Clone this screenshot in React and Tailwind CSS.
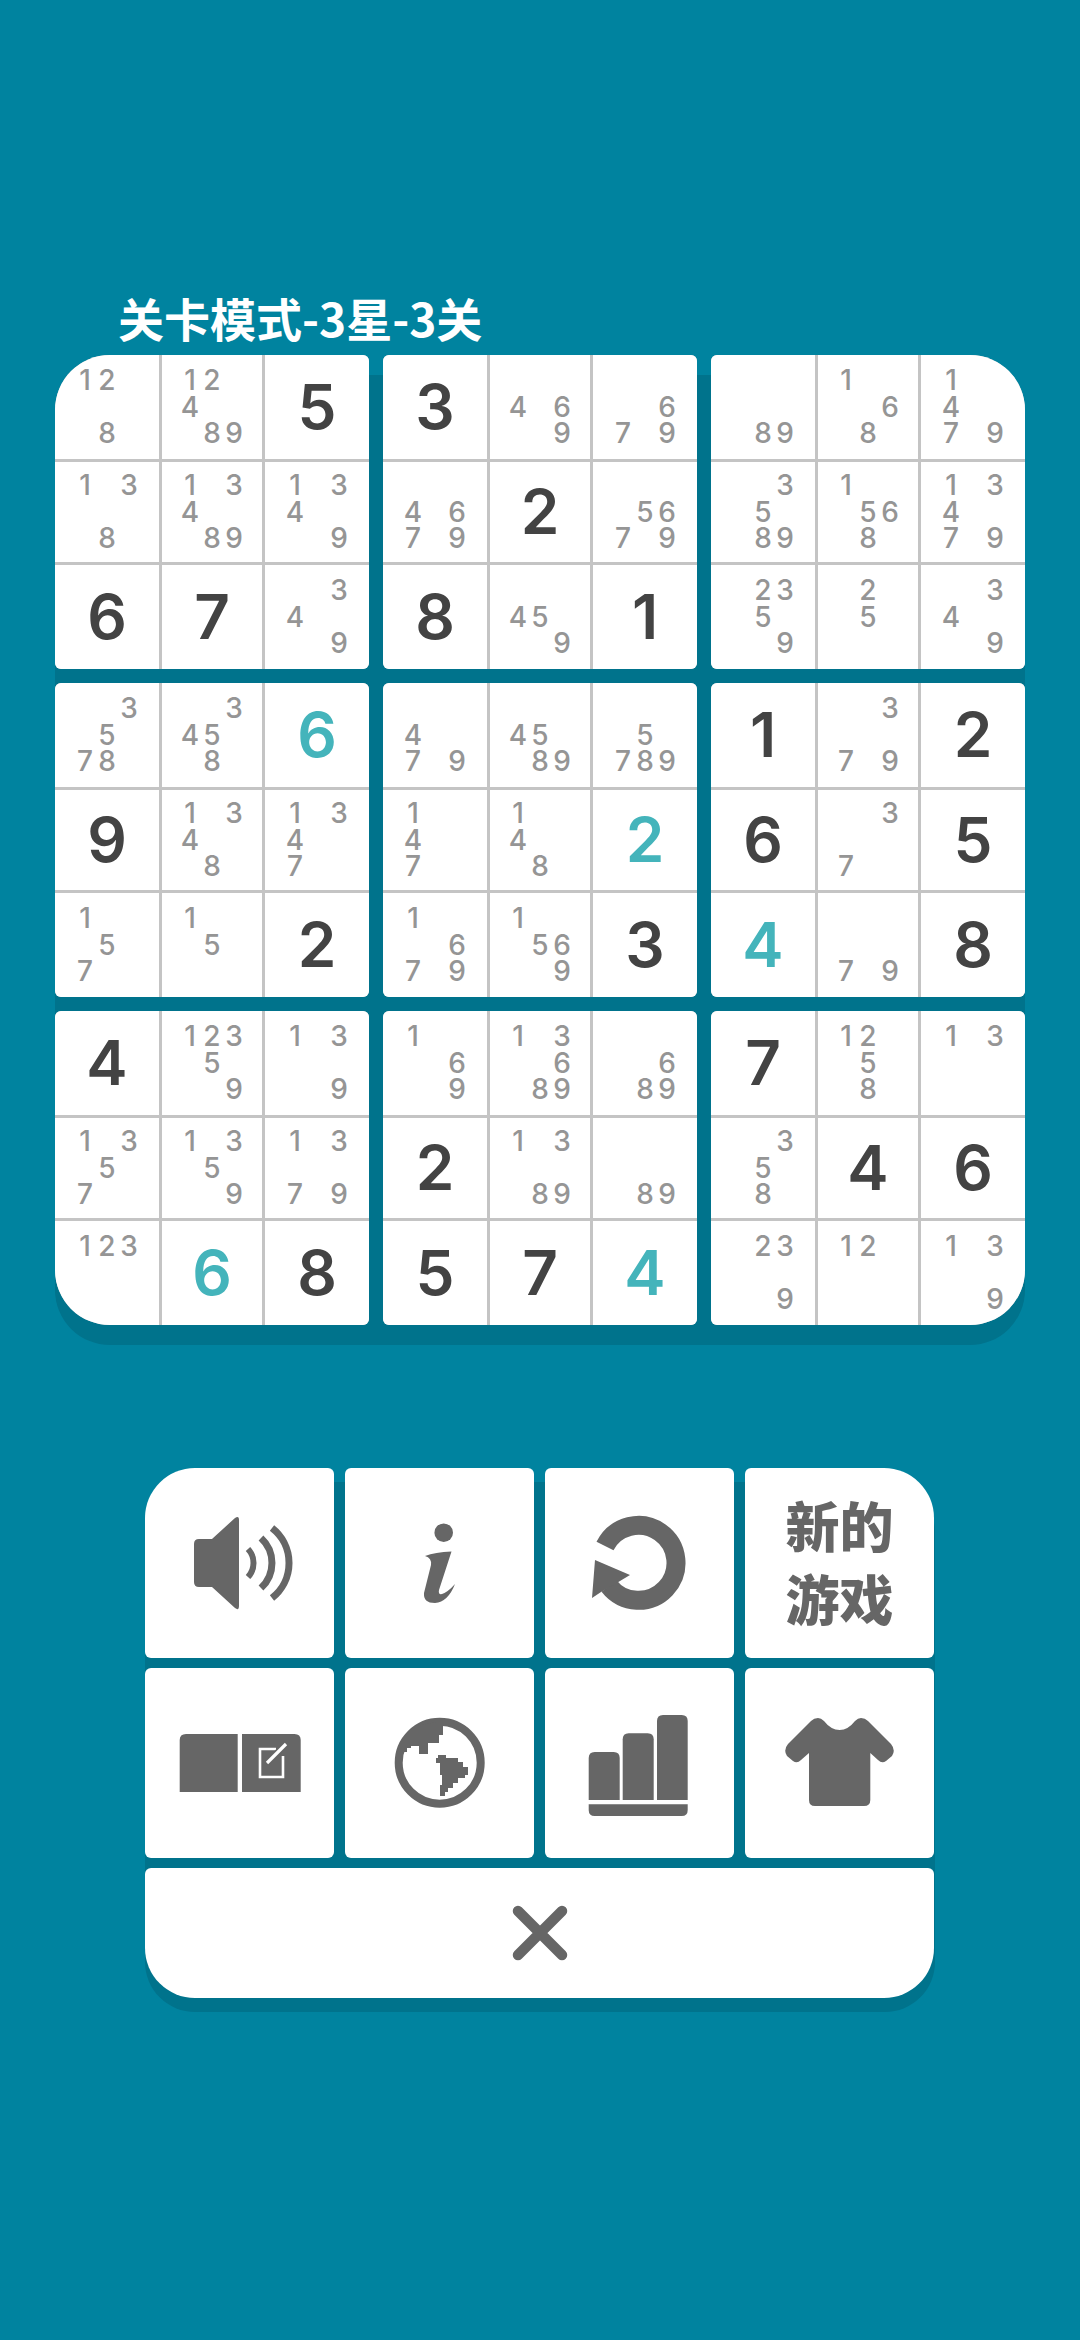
import React from 'react';

const CJK = { fontFamily: '"Noto Sans CJK SC", sans-serif' };
const NUM = { fontFamily: 'Inter, sans-serif' };

// every cell: number = placed digit, 't' suffix = teal digit, p… = pencil marks
const BLOCKS = [
  ['p128', 'p12489', '5', 'p138', 'p13489', 'p1349', '6', '7', 'p349'],
  ['3', 'p469', 'p679', 'p4679', '2', 'p5679', '8', 'p459', '1'],
  ['p89', 'p168', 'p1479', 'p3589', 'p1568', 'p13479', 'p2359', 'p25', 'p349'],
  ['p3578', 'p3458', '6t', '9', 'p1348', 'p1347', 'p157', 'p15', '2'],
  ['p479', 'p4589', 'p5789', 'p147', 'p148', '2t', 'p1679', 'p1569', '3'],
  ['1', 'p379', '2', '6', 'p37', '5', '4t', 'p79', '8'],
  ['4', 'p12359', 'p139', 'p1357', 'p1359', 'p1379', 'p123', '6t', '8'],
  ['p169', 'p13689', 'p689', '2', 'p1389', 'p89', '5', '7', '4t'],
  ['7', 'p1258', 'p13', 'p358', '4', '6', 'p239', 'p12', 'p139'],
];

const CORNERS = {
  0: 'rounded-tl-[55px]',
  2: 'rounded-tr-[55px]',
  6: 'rounded-bl-[55px]',
  8: 'rounded-br-[55px]',
};

function Cell({ value }) {
  if (value[0] === 'p') {
    return (
      <div className="bg-white flex items-center justify-center">
        <div className="grid grid-cols-[repeat(3,22px)] grid-rows-[repeat(3,26.5px)] text-[28px] leading-[26px] font-medium text-[#959595]" style={NUM}>
          {[1, 2, 3, 4, 5, 6, 7, 8, 9].map((n) => (
            <span key={n} className="text-center">
              {value.includes(String(n)) ? n : ''}
            </span>
          ))}
        </div>
      </div>
    );
  }
  const teal = value.endsWith('t');
  return (
    <div className={`bg-white flex items-center justify-center text-[62px] leading-none font-semibold ${teal ? 'text-[#44b4bb]' : 'text-[#434343]'}`} style={NUM}>
      {value[0]}
    </div>
  );
}

function Block({ cells, corner }) {
  return (
    <div className={`grid grid-cols-[104px_100px_104px] grid-rows-[104px_100px_104px] gap-[3px] bg-[#c4c4c4] rounded-[6px] overflow-hidden ${corner || ''}`}>
      {cells.map((c, i) => <Cell key={i} value={c} />)}
    </div>
  );
}

function TileIcon({ children }) {
  return <svg viewBox="0 0 189 190" className="w-full h-full" fill="#666666">{children}</svg>;
}

const Speaker = () => (
  <TileIcon>
    <path d="M54 71H67L90 50Q94 47 94 52V138Q94 143 90 140L67 119H54Q49 119 49 114V76Q49 71 54 71Z" />
    <g fill="none" stroke="#666666">
      <path d="M103 81A20.5 20.5 0 0 1 103 109" strokeWidth="6" />
      <path d="M116 70A34 34 0 0 1 116 120" strokeWidth="7" />
      <path d="M127 60A44.5 44.5 0 0 1 127 130" strokeWidth="7" />
    </g>
  </TileIcon>
);

const Info = () => (
  <TileIcon>
    <circle cx="98.7" cy="64.7" r="9.3" />
    <path d="M80 88Q90 84 106.5 83.5L94 122Q93 127 97 126Q103 124 110 116Q103 134 90 135Q78 135 79 125L86 97Q87 90 80 88Z" />
  </TileIcon>
);

const Replay = () => (
  <TileIcon>
    <path d="M60 78A37.5 37.5 0 1 1 64 118" fill="none" stroke="#666666" strokeWidth="19" />
    <path d="M50 92L85 107L70 116L56 124L47 130Z" />
  </TileIcon>
);

const Book = () => (
  <TileIcon>
    <path d="M41 66H92.7V124H34.7V72Q34.7 66 41 66Z" />
    <path d="M97 66H149.5Q155.7 66 155.7 72V124H97Z" />
    <path d="M131 81H115V109H138V88" fill="none" stroke="#ffffff" strokeWidth="2.6" />
    <path d="M122 95L141 76" stroke="#666666" strokeWidth="6.5" fill="none" />
    <path d="M122 95L141 76" stroke="#ffffff" strokeWidth="3.2" fill="none" />
  </TileIcon>
);

const Globe = () => (
  <TileIcon>
    <circle cx="94.7" cy="94.7" r="41" fill="none" stroke="#666666" strokeWidth="8" />
    <path d="M58 84H62V80H66V78H74V86H83V75H94V67H98V58L92 54L72 58L58 72Z" />
    <path d="M91 90H93V87H101V90H113V94H118V99H123V107H120V110H113V115H108V120H103V124H100V128H95V117H97V107H95V95H91Z" />
  </TileIcon>
);

const Stats = () => (
  <TileIcon>
    <path d="M49.7 84H68.7Q74.7 84 74.7 90V132H43.7V90Q43.7 84 49.7 84Z" />
    <path d="M83.7 65.3H102.7Q108.7 65.3 108.7 71.3V132H77.7V71.3Q77.7 65.3 83.7 65.3Z" />
    <path d="M118 47H136.7Q142.7 47 142.7 53V132H112V53Q112 47 118 47Z" />
    <path d="M43.7 136.3H142.7V142Q142.7 148 136.7 148H49.7Q43.7 148 43.7 142Z" />
  </TileIcon>
);

const Shirt = () => (
  <TileIcon>
    <path d="M73 50Q76 50 79 53Q86 62 94.7 62Q103 62 110 53Q113 50 116 50Q120 50 123 53L146 76Q151 82 147 88L141 93Q137 96 133 92L125.3 85V132Q125.3 138 119 138H70Q64 138 64 132V85L56 92Q52 96 48 93L42 88Q38 82 43 76L66 53Q69 50 73 50Z" />
  </TileIcon>
);

function Tile({ children, className }) {
  return <div className={`bg-white rounded-[6px] flex items-center justify-center ${className || ''}`}>{children}</div>;
}

export default function App() {
  return (
    <div className="w-[1080px] h-[2340px] bg-[#00839f] overflow-hidden">
      <div className="pt-[287px] pl-[118px] h-[355px] text-[46px] leading-[60px] font-bold text-white" style={CJK}>
        关卡模式-3星-3关
      </div>

      <div className="flex flex-col mx-[55px] mt-[20px] pb-[20px] bg-[#00738c] rounded-[55px]">
        <div className="-mt-[20px] grid grid-cols-[repeat(3,314px)] gap-[14px]">
          {BLOCKS.map((cells, i) => <Block key={i} cells={cells} corner={CORNERS[i]} />)}
        </div>
      </div>

      <div className="flex flex-col mx-[145px] mt-[137px] pb-[14px] bg-[#00738c] rounded-[50px]">
        <div className="-mt-[14px] grid grid-cols-[repeat(4,189px)] grid-rows-[190px_190px_130px] gap-x-[11px] gap-y-[10px]">
          <Tile className="rounded-tl-[50px]"><Speaker /></Tile>
          <Tile><Info /></Tile>
          <Tile><Replay /></Tile>
          <Tile className="rounded-tr-[50px]">
            <div className="pb-[5px] text-[54px] leading-[73px] font-black text-[#666666] text-center" style={CJK}>
              新的<br />游戏
            </div>
          </Tile>
          <Tile><Book /></Tile>
          <Tile><Globe /></Tile>
          <Tile><Stats /></Tile>
          <Tile><Shirt /></Tile>
          <Tile className="col-span-4 rounded-b-[50px]">
            <svg viewBox="0 0 56 56" className="w-[56px] h-[56px]">
              <path d="M6 6L50 50M50 6L6 50" fill="none" stroke="#666666" strokeWidth="10.5" strokeLinecap="round" />
            </svg>
          </Tile>
        </div>
      </div>
    </div>
  );
}
